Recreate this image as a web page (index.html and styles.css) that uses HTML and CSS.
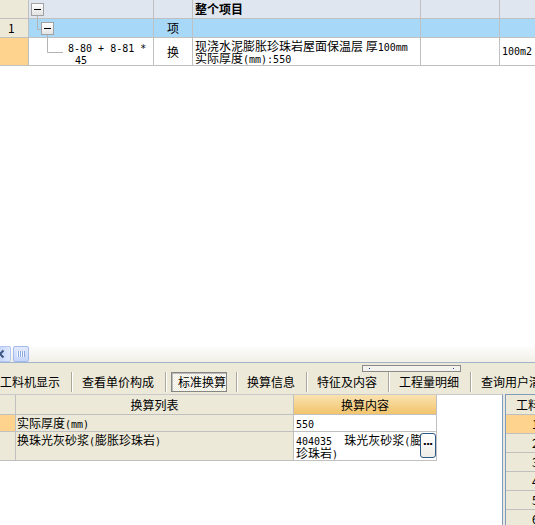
FILE: index.html
```html
<!DOCTYPE html>
<html lang="zh-CN">
<head>
<meta charset="utf-8">
<title>标准换算</title>
<link rel="stylesheet" href="styles.css">
</head>
<body>
<div class="app">
  <div class="top">
    <div class="tgrid">
      <div class="c rh"></div>
      <div class="c h0"></div>
      <div class="c h0"></div>
      <div class="c h0 bold">整个项目</div>
      <div class="c h0"></div>
      <div class="c h0"></div>

      <div class="c rh num">1</div>
      <div class="c sel"></div>
      <div class="c sel mid">项</div>
      <div class="c sel"></div>
      <div class="c sel"></div>
      <div class="c sel"></div>

      <div class="c rh cur"></div>
      <div class="c code"><span class="m">8-80 + 8-81 *</span><br><span class="m ind">45</span></div>
      <div class="c mid">换</div>
      <div class="c desc">现浇水泥膨胀珍珠岩屋面保温层 <span class="m"> </span>厚<span class="m">100mm</span><br>实际厚度<span class="m">(mm):550</span></div>
      <div class="c"></div>
      <div class="c unit"><span class="m">100m2</span></div>
    </div>
    <svg class="tree" width="70" height="66" viewBox="0 0 70 66">
      <defs>
        <linearGradient id="bx" x1="0" y1="0" x2="0" y2="1">
          <stop offset="0" stop-color="#ffffff"/>
          <stop offset="1" stop-color="#e2e2e2"/>
        </linearGradient>
      </defs>
      <path d="M37.5 16 V29.5 H41" fill="none" stroke="#b4b4b4"/>
      <path d="M47.5 35 V52.5 H63" fill="none" stroke="#b4b4b4"/>
      <rect x="31.5" y="3.5" width="12" height="12" fill="url(#bx)" stroke="#a2a2a2"/>
      <path d="M34 9.5 H41" stroke="#000"/>
      <rect x="41.5" y="22.5" width="12" height="12" fill="url(#bx)" stroke="#a2a2a2"/>
      <path d="M44 28.5 H51" stroke="#000"/>
    </svg>
  </div>

  <div class="blank"></div>

  <div class="hscroll">
    <div class="sb-btn">
      <svg width="10" height="14" viewBox="0 0 10 14"><path d="M4.5 3.5 L1 7 L4.5 10.5" fill="none" stroke="#3e5580" stroke-width="2"/></svg>
    </div>
    <div class="sb-thumb"><i></i><i></i><i></i><i></i></div>
  </div>

  <div class="tabs">
    <div class="tabrow">
      <span class="tab">工料机显示</span><span class="sep"></span>
      <span class="tab">查看单价构成</span><span class="sep"></span>
      <span class="tab on">标准换算</span><span class="sep"></span>
      <span class="tab">换算信息</span><span class="sep"></span>
      <span class="tab">特征及内容</span><span class="sep"></span>
      <span class="tab">工程量明细</span><span class="sep"></span>
      <span class="tab">查询用户清单</span>
    </div>
    <div class="grip"><i></i><i></i></div>
  </div>

  <div class="lower">
    <div class="lpanel">
      <div class="lgrid">
        <div class="g rh"></div>
        <div class="g hd">换算列表</div>
        <div class="g hd hor">换算内容</div>

        <div class="g rh cur"></div>
        <div class="g lc">实际厚度<span class="m">(mm)</span></div>
        <div class="g vc"><span class="m">550</span></div>

        <div class="g rh"></div>
        <div class="g lc top">换珠光灰砂浆<span class="m">(</span>膨胀珍珠岩<span class="m">)</span></div>
        <div class="g vc top val"><span class="m">404035</span><span class="gap"></span>珠光灰砂浆<span class="m">(</span>膨胀<br>珍珠岩<span class="m">)</span><span class="dots">...</span></div>
      </div>
    </div>
    <div class="split"></div>
    <div class="rpanel">
      <div class="r rhd">工料机显示</div>
      <div class="r cur"><span>1</span></div>
      <div class="r"><span>2</span></div>
      <div class="r"><span>3</span></div>
      <div class="r"><span>4</span></div>
      <div class="r"><span>5</span></div>
      <div class="r"><span>6</span></div>
    </div>
  </div>
</div>
</body>
</html>
```

FILE: styles.css
```css
html, body {
  margin: 0;
  padding: 0;
  width: 535px;
  height: 525px;
  overflow: hidden;
  background: #fff;
}
body {
  font-family: "Noto Sans CJK SC", "DejaVu Sans", sans-serif;
  font-size: 12px;
  line-height: 12px;
  color: #000;
}
.app {
  display: flex;
  flex-direction: column;
  width: 535px;
  height: 525px;
  overflow: hidden;
}
.m {
  font-family: "DejaVu Sans Mono", "Liberation Mono", monospace;
  font-size: 10px;
  line-height: 0;
}

/* ---------- top grid ---------- */
.top {
  position: relative;
  flex: none;
}
.tgrid {
  display: grid;
  grid-template-columns: 28px 124px 38px 227px 78px 1fr;
  grid-template-rows: 18px 18px 27px;
  gap: 1px;
  background: #c0c0c0;
  border-bottom: 1px solid #c0c0c0;
}
.c {
  background: #fff;
  overflow: hidden;
  white-space: nowrap;
}
.c.rh { background: #ece9d8; }
.c.rh.cur { background: #fdd38d; }
.c.h0 { background: #dfe6ef; }
.c.sel { background: #a7d8f7; }
.c.bold {
  font-weight: bold;
  line-height: 18px;
  padding-left: 2px;
}
.c.num {
  line-height: 18px;
  padding-left: 8px;
}
.c.mid {
  display: flex;
  align-items: center;
  justify-content: center;
}
.c.code {
  padding: 3px 0 0 39px;
  line-height: 12px;
}
.ind { padding-left: 7px; }
.c.desc {
  padding: 2px 0 0 2px;
  line-height: 12px;
}
.c.unit {
  display: flex;
  align-items: center;
  padding-left: 2px;
  line-height: 12px;
}
.tree {
  position: absolute;
  left: 0;
  top: 0;
}

.blank { flex: 1; }

/* ---------- scrollbar ---------- */
.hscroll {
  flex: none;
  height: 16px;
  display: flex;
  gap: 2px;
  background: linear-gradient(#fdfdfc, #f1efe7);
}
.sb-btn {
  width: 11px;
  box-sizing: border-box;
  border: 1px solid #b2c6f0;
  border-left: none;
  border-radius: 0 2px 2px 0;
  background: linear-gradient(90deg, #c8d8fb, #dde7fc);
  display: flex;
  align-items: center;
}
.sb-btn svg { display: block; margin-left: -1px; }
.sb-thumb {
  width: 16px;
  box-sizing: border-box;
  border: 1px solid #a3bbec;
  border-radius: 2px;
  background: linear-gradient(#e2eafd, #c5d5fa);
  display: flex;
  align-items: center;
  justify-content: center;
}
.sb-thumb i {
  display: block;
  width: 1px;
  height: 6px;
  background: #f3f7ff;
  border-right: 1px solid #8ea8e2;
}

/* ---------- tabs ---------- */
.tabs {
  position: relative;
  flex: none;
  height: 31px;
  background: #ece9d8;
  border-top: 1px solid #a2b4ca;
}
.tabrow {
  display: flex;
  align-items: flex-end;
  height: 29px;
  margin-left: -9px;
  white-space: nowrap;
}
.tab {
  height: 20px;
  line-height: 20px;
  padding: 0 11px 0 9px;
}
.tab.on {
  box-sizing: border-box;
  width: 59px;
  margin: 0 9px 0 4px;
  padding: 0 0 0 6px;
  border: 1px solid #858585;
  box-shadow: inset 1px 1px 0 #bdbdbd;
  background: repeating-conic-gradient(#ffffff 0 25%, #ece9d8 0 50%) 0 0 / 2px 2px;
  line-height: 18px;
}
.sep {
  box-sizing: border-box;
  width: 2px;
  height: 20px;
  border-left: 1px solid #aca899;
  border-right: 1px solid #fff;
}
.grip {
  position: absolute;
  left: 362px;
  top: 2px;
  width: 99px;
  height: 7px;
  box-sizing: border-box;
  border: 1px solid #8a8a8a;
  background: #f3f2ec;
  display: flex;
  justify-content: space-between;
  align-items: center;
  padding: 0 6px;
}
.grip i {
  display: block;
  width: 1px;
  height: 1px;
  background: #1b3fb0;
}

/* ---------- lower area ---------- */
.lower {
  flex: none;
  height: 131px;
  display: flex;
}
.lpanel {
  width: 502px;
  border-top: 1px solid #c9c9c9;
  border-right: 1px solid #7f9db9;
  background: #fff;
}
.lgrid {
  display: grid;
  grid-template-columns: 15px 277px 142px;
  grid-template-rows: 19px 16px 28px;
  gap: 1px;
  width: max-content;
  background: #c0c0c0;
  border-right: 1px solid #c0c0c0;
  border-bottom: 1px solid #c0c0c0;
}
.g {
  background: #fff;
  white-space: nowrap;
  overflow: hidden;
}
.g.rh { background: #ece9d8; }
.g.rh.cur { background: #fdd38d; }
.g.hd {
  background: #ece9d8;
  text-align: center;
  line-height: 19px;
}
.g.hor { background: linear-gradient(#fae2b0, #f2c46c); }
.g.lc {
  background: #ece9d8;
  padding-left: 1px;
  line-height: 16px;
}
.g.vc {
  padding-left: 2px;
  line-height: 16px;
}
.g.top {
  line-height: 13px;
  padding-top: 1px;
}
.g.val { position: relative; }
.gap {
  display: inline-block;
  width: 12px;
}
.dots {
  position: absolute;
  right: 0;
  top: 1px;
  width: 16px;
  height: 25px;
  box-sizing: border-box;
  border: 1px solid #2b5a8c;
  border-radius: 3px;
  background: linear-gradient(#ffffff, #eeede6);
  font-family: "DejaVu Sans", sans-serif;
  font-weight: bold;
  font-size: 11px;
  line-height: 16px;
  letter-spacing: -1px;
  text-align: center;
  padding-right: 1px;
}
.split {
  width: 2px;
  background: #e9e8e2;
}
.rpanel {
  flex: 1;
  border-top: 1px solid #7f9db9;
  border-left: 1px solid #7f9db9;
  background: #ece9d8;
  overflow: hidden;
}
.r {
  height: 18px;
  line-height: 18px;
  border-bottom: 1px solid #c0c0c0;
  white-space: nowrap;
  padding-left: 26px;
}
.r.rhd {
  height: 19px;
  line-height: 19px;
  padding-left: 10px;
}
.r.cur { background: #fdd38d; }
```
